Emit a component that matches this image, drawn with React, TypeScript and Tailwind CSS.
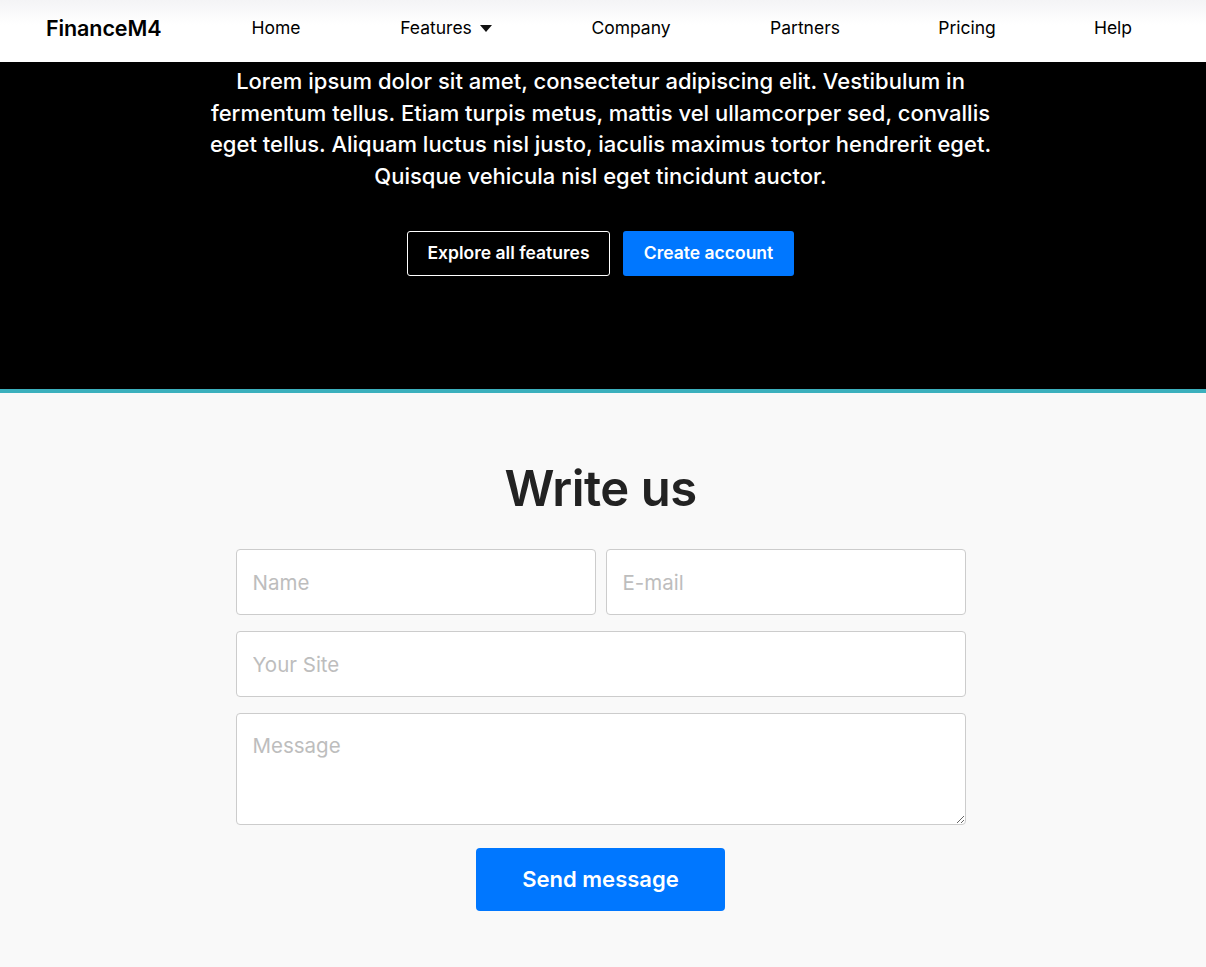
const navItems = [
  { label: "Home", w: "w-[170px]" },
  { label: "Features", caret: true, w: "w-[170px]" },
  { label: "Company", w: "w-[200px]" },
  { label: "Partners", w: "w-[148px]" },
  { label: "Pricing", w: "w-[176px]" },
  { label: "Help", w: "w-[116px]" },
];

export default function App() {
  return (
    <div className="min-h-screen bg-[#f9f9f9] font-['Inter',sans-serif] text-[#222]">
      {/* Nav */}
      <nav className="flex h-[62px] items-center bg-gradient-to-b from-[#f4f4f6] to-white to-40% pb-[6px] pl-[46px]">
        <span className="w-[145px] text-[21.5px] font-semibold tracking-[-0.1px] text-black">
          FinanceM4
        </span>
        <ul className="flex items-center">
          {navItems.map((item) => (
            <li
              key={item.label}
              className={`flex items-center justify-center gap-2 text-[17.5px] text-black ${item.w}`}
            >
              {item.label}
              {item.caret && (
                <svg width="12" height="7" viewBox="0 0 12 7">
                  <path d="M0 0h12L6 7z" fill="#111" />
                </svg>
              )}
            </li>
          ))}
        </ul>
      </nav>

      {/* Hero */}
      <section className="border-b-4 border-[#3bb0bd] bg-black pt-[4px] pb-[113px]">
        <div className="pr-[5px]">
          <p className="mx-auto w-[800px] text-center text-[22px] leading-[31.5px] font-medium text-white">
            Lorem ipsum dolor sit amet, consectetur adipiscing elit. Vestibulum
            in fermentum tellus. Etiam turpis metus, mattis vel ullamcorper
            sed, convallis eget tellus. Aliquam luctus nisl justo, iaculis
            maximus tortor hendrerit eget. Quisque vehicula nisl eget tincidunt
            auctor.
          </p>
          <div className="mt-[39px] flex justify-center gap-[13px]">
            <button className="h-[45px] w-[203px] rounded-[3px] border border-white text-[17.5px] font-semibold text-white">
              Explore all features
            </button>
            <button className="h-[45px] w-[171px] rounded-[3px] bg-[#0077ff] text-[17.5px] font-semibold text-white">
              Create account
            </button>
          </div>
        </div>
      </section>

      {/* Contact */}
      <section className="pt-[71px] pr-[5px] pb-[56px]">
        <h2 className="text-center text-[49px] leading-[1] font-semibold tracking-[-0.5px] text-[#222]">
          Write us
        </h2>
        <form className="mx-auto mt-[36px] flex w-[730px] flex-col gap-4">
          <div className="flex gap-[10px]">
            <input
              placeholder="Name"
              className="h-[66px] flex-1 rounded border border-[#ccc] bg-white px-4 text-[20.5px] outline-none placeholder:text-[#bdbdbd]"
            />
            <input
              placeholder="E-mail"
              className="h-[66px] flex-1 rounded border border-[#ccc] bg-white px-4 text-[20.5px] outline-none placeholder:text-[#bdbdbd]"
            />
          </div>
          <input
            placeholder="Your Site"
            className="h-[66px] rounded border border-[#ccc] bg-white px-4 text-[20.5px] outline-none placeholder:text-[#bdbdbd]"
          />
          <textarea
            placeholder="Message"
            className="h-[112px] rounded border border-[#ccc] bg-white px-4 pt-[20px] text-[20.5px] leading-[1.2] outline-none placeholder:text-[#bdbdbd]"
          />
          <button
            type="button"
            className="mx-auto mt-[7px] h-[63px] w-[249px] rounded bg-[#0077ff] text-[22px] font-semibold text-white"
          >
            Send message
          </button>
        </form>
      </section>
    </div>
  );
}
